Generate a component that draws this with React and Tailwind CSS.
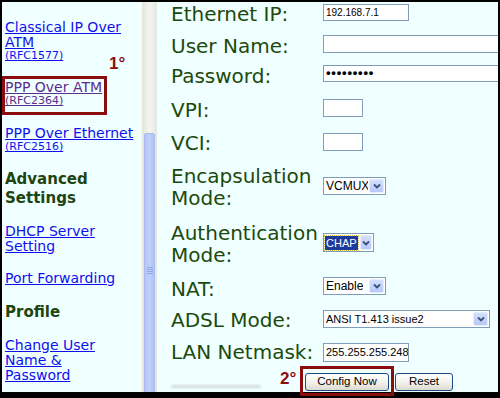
import React from "react";

const sans = "font-['DejaVu_Sans',Verdana,sans-serif]";
const ctl = "font-['Liberation_Sans',Arial,sans-serif]";

function Chevron() {
  return (
    <svg width="8" height="6" viewBox="0 0 8 6">
      <polyline points="1,1.5 4,4.5 7,1.5" fill="none" stroke="#3d4f7a" strokeWidth="1.8" />
    </svg>
  );
}

function TextBox({ w, h = 18, children, cls = "" }) {
  return (
    <div
      className={`border border-[#7f9db9] bg-white pl-[2px] text-black ${ctl} overflow-hidden whitespace-nowrap ${cls}`}
      style={{ width: w, height: h }}
    >
      {children}
    </div>
  );
}

function Select({ w, h = 18, text, selected = false, size = "text-[12px]", aw = 15 }) {
  return (
    <div
      className={`flex border border-[#7f9db9] bg-white ${ctl}`}
      style={{ width: w, height: h }}
    >
      <div className={`flex-1 flex items-center ${selected ? "pl-[1px]" : "pl-[2px] pr-[1px]"} overflow-hidden`}>
        {selected ? (
          <span className={`bg-[#1e3a9c] text-white ${size} leading-[14px] px-[1px] whitespace-nowrap outline outline-1 outline-dotted outline-[#d8c040]`}>
            {text}
          </span>
        ) : (
          <span className={`text-black ${size} leading-[15px] whitespace-nowrap`}>{text}</span>
        )}
      </div>
      <div
        className="shrink-0 m-[1px] rounded-[2px] bg-gradient-to-b from-[#d3e0fd] to-[#b6c9f8] border border-[#e4ecfe] flex items-center justify-center"
        style={{ width: aw }}
      >
        <Chevron />
      </div>
    </div>
  );
}

function Link({ children, visited = false, small = false }) {
  return (
    <div
      className={`underline whitespace-nowrap ${visited ? "text-[#5b2c8c]" : "text-[#1010ee]"} ${
        small ? "text-[11px] leading-[12px]" : "text-[14px] leading-[15px]"
      }`}
    >
      {children}
    </div>
  );
}

function Row({ label, mt, h = 22, cmt, children }) {
  return (
    <div className="flex items-start" style={{ marginTop: mt, height: h }}>
      <div className={`w-[152px] shrink-0 text-[20px] leading-[22px] text-[#1c4a0c] ${sans}`}>{label}</div>
      <div style={{ marginTop: cmt }}>{children}</div>
    </div>
  );
}

function Button({ w, children }) {
  return (
    <div
      className={`h-[18px] rounded-[3px] border border-[#1c4a86] bg-gradient-to-b from-[#ffffff] via-[#f4f3ee] to-[#dcdad0] flex items-center justify-center text-[11.5px] text-black ${ctl}`}
      style={{ width: w }}
    >
      {children}
    </div>
  );
}

export default function App() {
  return (
    <div className="relative w-[500px] h-[398px] bg-black pt-[2px] pl-[2px] pr-[2px] pb-[6px] overflow-hidden">
      <div className="flex h-full bg-[#f0ffff]">
        {/* Left navigation */}
        <div className={`w-[140px] shrink-0 pl-[3px] pt-[18px] overflow-hidden ${sans}`}>
          <div>
            <Link>Classical IP Over</Link>
            <Link>ATM</Link>
            <Link small>(RFC1577)</Link>
          </div>
          <div className="mt-[18px]">
            <Link visited>PPP Over ATM</Link>
            <Link visited small>(RFC2364)</Link>
          </div>
          <div className="mt-[19px]">
            <Link>PPP Over Ethernet</Link>
            <Link small>(RFC2516)</Link>
          </div>
          <div className="mt-[17px] font-bold text-[15px] leading-[19px] text-[#1e4510]">
            <div>Advanced</div>
            <div>Settings</div>
          </div>
          <div className="mt-[16px]">
            <Link>DHCP Server</Link>
            <Link>Setting</Link>
          </div>
          <div className="mt-[17px]">
            <Link>Port Forwarding</Link>
          </div>
          <div className="mt-[17px] font-bold text-[15px] leading-[19px] text-[#1e4510]">Profile</div>
          <div className="mt-[16px]">
            <Link>Change User</Link>
            <Link>Name &amp;</Link>
            <Link>Password</Link>
          </div>
        </div>

        {/* Scrollbar */}
        <div className="w-[15px] shrink-0 flex flex-col overflow-hidden bg-gradient-to-r from-[#e2e6dc] via-[#f4f5f0] to-[#e4e7de]">
          <div className="h-[131px] shrink-0" />
          <div className="mx-[2px] h-[290px] shrink-0 rounded-[2px] border border-[#a9baf0] bg-gradient-to-r from-[#b4c6f7] via-[#c0d0fb] to-[#b0c2f5] flex flex-col items-center pt-[133px]">
            <div className="w-[6px] flex flex-col gap-[1px]">
              <div className="h-[1px] bg-[#8fa5e6]" />
              <div className="h-[1px] bg-[#8fa5e6]" />
              <div className="h-[1px] bg-[#8fa5e6]" />
              <div className="h-[1px] bg-[#8fa5e6]" />
            </div>
          </div>
        </div>

        {/* Right form */}
        <div className="flex-1 flex flex-col pl-[14px] overflow-hidden">
          <Row label="Ethernet IP:" mt={1} cmt={1}>
            <TextBox w={86} h={17} cls="text-[10px] leading-[15px]">192.168.7.1</TextBox>
          </Row>
          <Row label="User Name:" mt={10} cmt={0}>
            <TextBox w={220} h={18} />
          </Row>
          <Row label="Password:" mt={8} cmt={0}>
            <TextBox w={220} h={17} cls="text-[13px] leading-[14px] font-bold tracking-[0.8px]">
              •••••••••
            </TextBox>
          </Row>
          <Row label="VPI:" mt={12} cmt={0}>
            <TextBox w={40} h={18} />
          </Row>
          <Row label="VCI:" mt={11} cmt={1}>
            <TextBox w={40} h={18} />
          </Row>
          <Row label={<>Encapsulation<br />Mode:</>} mt={11} h={44} cmt={12}>
            <Select w={63} text="VCMUX" />
          </Row>
          <Row label={<>Authentication<br />Mode:</>} mt={13} h={44} cmt={11}>
            <Select w={51} h={19} text="CHAP" selected size="text-[11px]" aw={12} />
          </Row>
          <Row label="NAT:" mt={12} cmt={-1}>
            <Select w={63} text="Enable" />
          </Row>
          <Row label="ADSL Mode:" mt={9} cmt={1}>
            <Select w={167} text="ANSI T1.413 issue2" size="text-[11px]" />
          </Row>
          <Row label="LAN Netmask:" mt={10} cmt={2}>
            <TextBox w={86} h={19} cls="text-[11px] leading-[17px]">255.255.255.248</TextBox>
          </Row>
          <div className="flex items-start mt-[10px]">
            <div className="w-[134px] shrink-0 pt-[12px]">
              <div className="h-[3px] w-[90px] rounded-full bg-[#d6dcdc] blur-[1px]" />
            </div>
            <Button w={84}>Config Now</Button>
            <div className="w-[6px]" />
            <Button w={58}>Reset</Button>
          </div>
        </div>
      </div>

      {/* Annotations */}
      <div className="absolute left-[2px] top-[76px] w-[105px] h-[39px] border-[3px] border-[#8b0e0e]" />
      <div className={`absolute left-[109px] top-[55px] text-[17px] leading-[17px] font-bold text-[#8b0e0e] ${ctl}`}>1°</div>
      <div className="absolute left-[300px] top-[366px] w-[94px] h-[30px] border-[3px] border-[#8b0e0e]" />
      <div className={`absolute left-[280px] top-[370px] text-[17px] leading-[17px] font-bold text-[#8b0e0e] ${ctl}`}>2°</div>
    </div>
  );
}
